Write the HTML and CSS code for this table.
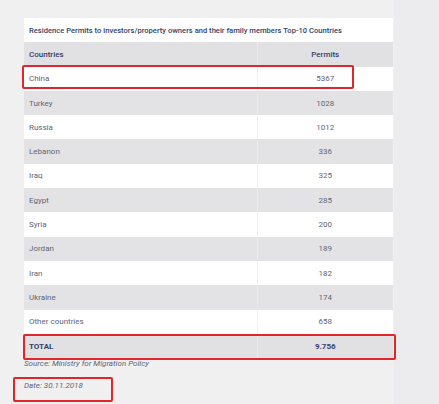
FILE: index.html
```html
<!DOCTYPE html>
<html>
<head>
<meta charset="utf-8">
<link rel="stylesheet" href="styles.css">
</head>
<body>
<div class="page">
  <div class="wrap">
    <table class="permits">
      <colgroup><col class="col1"><col class="col2"></colgroup>
      <tr class="title"><td colspan="2">Residence Permits to investors/property owners and their family members Top-10 Countries</td></tr>
      <tr class="head"><td class="c1">Countries</td><td class="c2">Permits</td></tr>
      <tr class="w"><td class="c1">China</td><td class="c2">5367</td></tr>
      <tr class="g"><td class="c1">Turkey</td><td class="c2">1028</td></tr>
      <tr class="w"><td class="c1">Russia</td><td class="c2">1012</td></tr>
      <tr class="g"><td class="c1">Lebanon</td><td class="c2">336</td></tr>
      <tr class="w"><td class="c1">Iraq</td><td class="c2">325</td></tr>
      <tr class="g"><td class="c1">Egypt</td><td class="c2">285</td></tr>
      <tr class="w"><td class="c1">Syria</td><td class="c2">200</td></tr>
      <tr class="g"><td class="c1">Jordan</td><td class="c2">189</td></tr>
      <tr class="w"><td class="c1">Iran</td><td class="c2">182</td></tr>
      <tr class="g"><td class="c1">Ukraine</td><td class="c2">174</td></tr>
      <tr class="w"><td class="c1">Other countries</td><td class="c2">658</td></tr>
      <tr class="total"><td class="c1">TOTAL</td><td class="c2">9.756</td></tr>
    </table>
    <div class="mark mark-china"></div>
    <div class="mark mark-total"></div>
    <p class="source">Source: Ministry for Migration Policy</p>
    <p class="date">Date: 30.11.2018</p>
    <div class="mark mark-date"></div>
  </div>
</div>
</body>
</html>
```
FILE: styles.css
```css
html, body {
  margin: 0;
  padding: 0;
  background: #ececee;
}
.page {
  width: 394px;
  height: 404px;
  background: #f0f0f1;
  padding-top: 18px;
  box-sizing: border-box;
}
.wrap {
  position: relative;
  margin-left: 24px;
  width: 369px;
  font-family: "Roboto", "Liberation Sans", sans-serif;
}
.permits {
  width: 369px;
  border-collapse: collapse;
  table-layout: fixed;
}
.col1 {
  width: 233px;
}
.col2 {
  width: 136px;
}
.permits td {
  height: 24.3px;
  padding: 0 0 0 5px;
  font-size: 8px;
  color: #5d6579;
  vertical-align: middle;
  box-sizing: border-box;
}
.permits td.c2 {
  text-align: center;
  padding: 0;
  border-left: 1px solid #f0f0f1;
}
.permits .title td {
  background: #ffffff;
  color: #34426a;
  font-weight: 500;
  font-size: 7.6px;
}
.permits .head td,
.permits .total td {
  background: #e1e1e3;
  color: #34426a;
  font-weight: 500;
}
.permits .head td.c2,
.permits .g td.c2,
.permits .total td.c2 {
  border-left-color: #e9e9eb;
}
.permits .total td {
  font-weight: 700;
}
.permits .w td {
  background: #ffffff;
}
.permits .g td {
  background: #e3e3e5;
}
.source,
.date {
  margin: 0;
  font-size: 8px;
  font-style: italic;
  color: #5d6579;
}
.source {
  margin-top: 0;
  height: 12px;
  line-height: 12px;
}
.date {
  margin-top: 10px;
  line-height: 12px;
}
.mark {
  position: absolute;
  border: 2px solid #e2252b;
  border-radius: 2px;
  box-sizing: border-box;
}
.mark-china {
  left: -2px;
  top: 47px;
  width: 332px;
  height: 24px;
}
.mark-total {
  left: -1px;
  top: 316px;
  width: 373px;
  height: 26px;
}
.mark-date {
  left: -11px;
  top: 359px;
  width: 100px;
  height: 25px;
}
```
